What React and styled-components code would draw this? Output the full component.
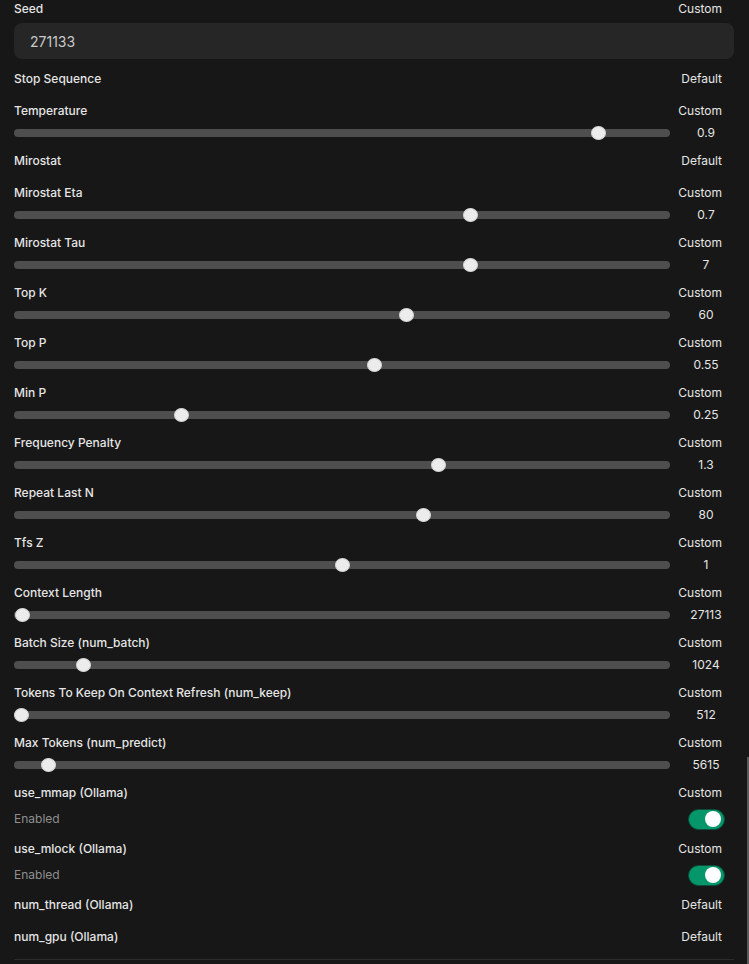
import React from "react";
import styled, { createGlobalStyle } from "styled-components";

const GlobalStyle = createGlobalStyle`
  html, body {
    margin: 0;
    padding: 0;
    background: #171717;
    height: 100%;
    overflow: hidden;
  }
  body {
    font-family: Inter, "Noto Sans", "Liberation Sans", sans-serif;
    color: #e5e5e5;
  }
`;

const sliders = [
  { name: "Temperature", value: "0.9", frac: 0.9 },
  { name: "Mirostat", plain: true },
  { name: "Mirostat Eta", value: "0.7", frac: 0.7 },
  { name: "Mirostat Tau", value: "7", frac: 0.7 },
  { name: "Top K", value: "60", frac: 0.6 },
  { name: "Top P", value: "0.55", frac: 0.55 },
  { name: "Min P", value: "0.25", frac: 0.25 },
  { name: "Frequency Penalty", value: "1.3", frac: 0.65 },
  { name: "Repeat Last N", value: "80", frac: 81 / 129 },
  { name: "Tfs Z", value: "1", frac: 0.5 },
  { name: "Context Length", value: "27113", frac: 0.001 },
  { name: "Batch Size (num_batch)", value: "1024", frac: 0.096 },
  { name: "Tokens To Keep On Context Refresh (num_keep)", value: "512", frac: 0 },
  { name: "Max Tokens (num_predict)", value: "5615", frac: 0.0429 },
];

export default function App() {
  return (
    <Page>
      <GlobalStyle />
      <Scrollbar />
      <List>
        <Item>
          <Header>
            <Label>Seed</Label>
            <Mode>Custom</Mode>
          </Header>
          <SeedInput defaultValue="271133" />
        </Item>

        <Item>
          <Header>
            <Label>Stop Sequence</Label>
            <Mode>Default</Mode>
          </Header>
        </Item>

        {sliders.map((s) =>
          s.plain ? (
            <Item key={s.name}>
              <Header>
                <Label>{s.name}</Label>
                <Mode>Default</Mode>
              </Header>
            </Item>
          ) : (
            <Item key={s.name}>
              <Header>
                <Label>{s.name}</Label>
                <Mode>Custom</Mode>
              </Header>
              <SliderRow>
                <Range
                  type="range"
                  min="0"
                  max="10000"
                  defaultValue={Math.round(s.frac * 10000)}
                />
                <Value>{s.value}</Value>
              </SliderRow>
            </Item>
          )
        )}

        {["use_mmap (Ollama)", "use_mlock (Ollama)"].map((name) => (
          <Item key={name}>
            <Header>
              <Label>{name}</Label>
              <Mode>Custom</Mode>
            </Header>
            <ToggleRow>
              <Hint>Enabled</Hint>
              <Switch $on>
                <Knob />
              </Switch>
            </ToggleRow>
          </Item>
        ))}

        <Item>
          <Header>
            <Label>num_thread (Ollama)</Label>
            <Mode>Default</Mode>
          </Header>
        </Item>
        <Item>
          <Header>
            <Label>num_gpu (Ollama)</Label>
            <Mode>Default</Mode>
          </Header>
        </Item>
      </List>
      <Divider />
    </Page>
  );
}

const Page = styled.div`
  position: relative;
  width: 749px;
  height: 964px;
  overflow: hidden;
  background: #171717;
  padding: 0 15px 0 14px;
  box-sizing: border-box;
`;

const Scrollbar = styled.div`
  position: absolute;
  right: 0;
  top: 757px;
  width: 2px;
  height: 207px;
  background: #5a5a5a;
`;

const List = styled.div`
  display: flex;
  flex-direction: column;
  gap: 4px;
  margin-top: -5px;
`;

const Item = styled.div`
  padding: 2px 0;
  display: flex;
  flex-direction: column;
`;

const Header = styled.div`
  display: flex;
  justify-content: space-between;
  align-items: center;
  height: 24px;
`;

const Label = styled.div`
  font-size: 12px;
  font-weight: 500;
  line-height: 16px;
  color: #e5e5e5;
`;

const Mode = styled.div`
  font-size: 12px;
  line-height: 16px;
  padding: 4px 12px;
  color: #e5e5e5;
`;

const SeedInput = styled.input`
  margin-top: 2px;
  height: 36px;
  box-sizing: border-box;
  width: 100%;
  border: none;
  outline: none;
  border-radius: 8px;
  padding: 8px 16px;
  background: #262626;
  color: #c9c9c9;
  font-family: Inter, "Noto Sans", "Liberation Sans", sans-serif;
  font-size: 14px;
`;

const SliderRow = styled.div`
  display: flex;
  align-items: center;
  gap: 8px;
  margin-top: 2px;
  height: 16px;
`;

const Range = styled.input`
  flex: 1;
  margin: 0;
  height: 8px;
  border-radius: 8px;
  background: #4e4e4e;
  appearance: none;
  -webkit-appearance: none;
  outline: none;

  &::-webkit-slider-thumb {
    -webkit-appearance: none;
    appearance: none;
    width: 15px;
    height: 14px;
    border-radius: 50%;
    background: #ececec;
    border: 1px solid #d4d4d4;
    box-sizing: border-box;
  }
  &::-moz-range-thumb {
    width: 15px;
    height: 14px;
    border-radius: 50%;
    background: #ececec;
    border: none;
  }
`;

const Value = styled.div`
  width: 56px;
  text-align: center;
  font-size: 12px;
  line-height: 16px;
  color: #e5e5e5;
`;

const ToggleRow = styled.div`
  display: flex;
  justify-content: space-between;
  align-items: center;
  margin-top: 4px;
  height: 20px;
  padding-right: 9px;
`;

const Hint = styled.div`
  font-size: 12px;
  line-height: 16px;
  color: #8e8e8e;
`;

const Switch = styled.div`
  display: flex;
  align-items: center;
  justify-content: ${(p) => (p.$on ? "flex-end" : "flex-start")};
  width: 37px;
  height: 21px;
  box-sizing: border-box;
  padding: 0 3px;
  border-radius: 999px;
  background: ${(p) => (p.$on ? "#059669" : "#4e4e4e")};
  border: 1px solid #0b4d39;
`;

const Knob = styled.div`
  width: 16px;
  height: 16px;
  border-radius: 50%;
  background: #ffffff;
`;

const Divider = styled.div`
  margin-top: 8px;
  height: 1px;
  background: #2c2c2c;
`;
